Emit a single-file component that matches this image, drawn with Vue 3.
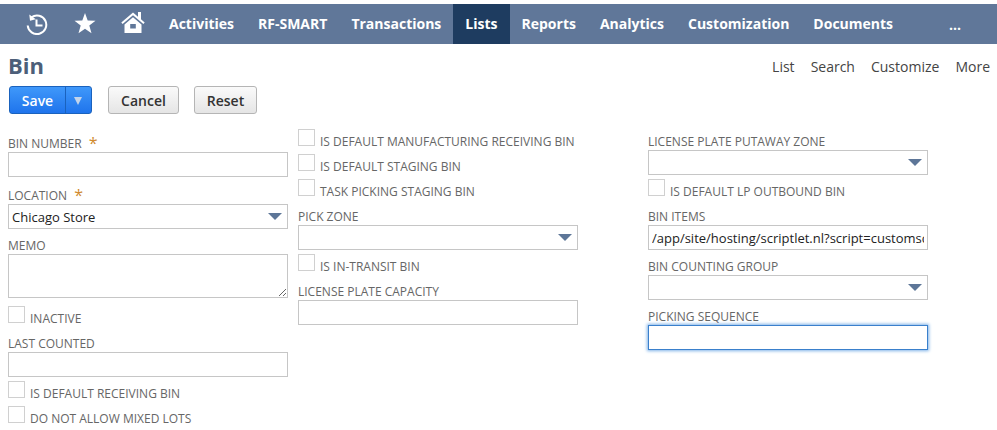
<script setup>
const navItems = ['Activities','RF-SMART','Transactions','Lists','Reports','Analytics','Customization','Documents']
const links = ['List','Search','Customize','More']
</script>

<template>
  <div class="page">
    <nav class="nav">
      <div class="icons">
        <svg class="ic clock" width="22" height="22" viewBox="0 0 22 22" fill="none" stroke="#fff" stroke-width="2">
          <path d="M5.500 4.200A9.300 9.300 0 1 1 1.700 12.500" />
          <path d="M3.300 1.500l0.700 6.300 5.800-1.500z" fill="#fff" stroke="none" />
          <path d="M10.500 6.500v6h6" />
        </svg>
        <svg class="ic star" width="22" height="21" viewBox="0 0 22 21" fill="#fff">
          <path d="M11 0l2.700 7.400 7.800.3-6.200 4.800 2.200 7.700L11 15.800l-6.500 4.400 2.200-7.700L0.500 7.700l7.800-.3z" />
        </svg>
        <svg class="ic home" width="24" height="21" viewBox="0 0 24 21" fill="#fff">
          <path d="M12 0.500L0.300 10.500l1.300 1.500L12 3.200 22.400 12l1.300-1.500-3.700-3.200V0h-3v4.800z" />
          <path fill-rule="evenodd" d="M12 5.200L3.500 12.500V21h17v-8.500zM9.200 12h5.600v4.500H9.200z" />
        </svg>
      </div>
      <a v-for="item in navItems" :key="item" class="item" :class="{ active: item === 'Lists' }">{{ item }}</a>
      <a class="more">...</a>
    </nav>

    <header class="head">
      <h1>Bin</h1>
      <div class="links"><a v-for="l in links" :key="l">{{ l }}</a></div>
    </header>

    <div class="buttons">
      <div class="save">
        <span class="save-label">Save</span>
        <span class="save-arrow"></span>
      </div>
      <button class="btn cancel">Cancel</button>
      <button class="btn reset">Reset</button>
    </div>

    <div class="form">
      <div class="col c1">
        <label class="lbl req">BIN NUMBER <i>*</i></label>
        <input class="inp" />
        <label class="lbl req">LOCATION <i>*</i></label>
        <div class="sel">Chicago Store<b></b></div>
        <label class="lbl">MEMO</label>
        <textarea class="area"></textarea>
        <div class="chk"><span></span>INACTIVE</div>
        <label class="lbl">LAST COUNTED</label>
        <input class="inp" />
        <div class="chk"><span></span>IS DEFAULT RECEIVING BIN</div>
        <div class="chk"><span></span>DO NOT ALLOW MIXED LOTS</div>
      </div>
      <div class="col c2">
        <div class="chk"><span></span>IS DEFAULT MANUFACTURING RECEIVING BIN</div>
        <div class="chk"><span></span>IS DEFAULT STAGING BIN</div>
        <div class="chk"><span></span>TASK PICKING STAGING BIN</div>
        <label class="lbl">PICK ZONE</label>
        <div class="sel"><b></b></div>
        <div class="chk"><span></span>IS IN-TRANSIT BIN</div>
        <label class="lbl">LICENSE PLATE CAPACITY</label>
        <input class="inp" />
      </div>
      <div class="col c3">
        <label class="lbl">LICENSE PLATE PUTAWAY ZONE</label>
        <div class="sel"><b></b></div>
        <div class="chk"><span></span>IS DEFAULT LP OUTBOUND BIN</div>
        <label class="lbl">BIN ITEMS</label>
        <input class="inp url" value="/app/site/hosting/scriptlet.nl?script=customscript_rfs_bin_items" />
        <label class="lbl">BIN COUNTING GROUP</label>
        <div class="sel"><b></b></div>
        <label class="lbl">PICKING SEQUENCE</label>
        <input class="inp focus" />
      </div>
    </div>
  </div>
</template>

<style>
html, body { margin: 0; background: #fff; }
</style>

<style scoped>
.page { width: 997px; height: 430px; overflow: hidden; font-family: "Open Sans", sans-serif; color: #333; padding-top: 4px; box-sizing: border-box; }
.nav { height: 40px; background: #607799; display: flex; align-items: stretch; color: #fff; }
.icons { width: 157px; display: flex; align-items: center; flex: none; }
.ic { display: block; flex: none; }
.clock { margin-left: 26px; margin-top: -1px; }
.star { margin-left: 26px; margin-top: -1px; }
.home { margin-left: 25px; margin-top: -3px; }
.item { padding: 0 12px; font-size: 14px; font-weight: 700; line-height: 40px; }
.item.active { background: #1e3c60; }
.more { margin-left: 44px; font-size: 14px; font-weight: 700; line-height: 42px; }
.head { display: flex; justify-content: space-between; align-items: center; height: 36px; padding: 6px 7px 0 8px; box-sizing: border-box; }
h1 { margin: 0; font-size: 22px; font-weight: 700; color: #4d5f79; line-height: 30px; }
.links { display: flex; gap: 16px; font-size: 14px; color: #444; margin-top: 2px; }
.buttons { display: flex; margin: 6px 0 0 9px; height: 28px; }
.save { width: 83px; height: 28px; box-sizing: border-box; display: flex; border: 1px solid #1a62bd; border-radius: 3px; background: linear-gradient(#3f98fa, #1f74ec); color: #fff; font-size: 14px; font-weight: 600; }
.save-label { width: 56px; text-align: center; line-height: 27px; border-right: 1px solid #1a62bd; box-sizing: border-box; }
.save-arrow { flex: 1; position: relative; }
.save-arrow::after { content: ""; position: absolute; left: 8px; top: 10px; border: 4px solid transparent; border-top: 8px solid #c3d4ea; border-bottom: 0; }
.btn { height: 28px; box-sizing: border-box; border: 1px solid #b5b5b5; border-radius: 3px; background: linear-gradient(#fafafa, #e5e5e5); font: 600 14px "Open Sans", sans-serif; color: #333; padding: 0; margin: 0; }
.cancel { margin-left: 16px; margin-right: 15px; width: 71px; }
.reset { width: 63px; }
.form { display: flex; padding-left: 8px; margin-top: 11px; }
.col { width: 280px; display: flex; flex-direction: column; align-items: flex-start; flex: none; }
.c2 { margin-left: 10px; }
.c3 { margin-left: 70px; }
.lbl { height: 25px; width: 100%; font-size: 12px; line-height: 16px; color: #666; display: flex; align-items: flex-end; box-sizing: border-box; white-space: pre; }
.lbl.req { height: 27px; }
.lbl i { font-style: normal; font-size: 16px; color: #d08a2e; margin-left: 4px; line-height: 18px; }
.inp, .sel { width: 280px; height: 25px; box-sizing: border-box; border: 1px solid #c6c6c6; background: #fff; margin: 0; flex: none; display: block; outline: none; }
.sel { position: relative; font-size: 13px; line-height: 25px; padding-left: 3px; color: #222; }
.sel b { position: absolute; right: 5px; top: 8px; width: 0; height: 0; border-left: 7px solid transparent; border-right: 7px solid transparent; border-top: 7px solid #5d7698; }
.url { font: 13px "Open Sans", sans-serif; color: #222; padding: 0 3px; }
.focus { border-color: #3a80cc; box-shadow: 0 0 3px 1px #7fb3e8; }
.area { width: 280px; height: 44px; box-sizing: border-box; border: 1px solid #c6c6c6; margin: 0 0 4px; display: block; flex: none; }
.chk { height: 25px; display: flex; align-items: flex-end; width: 100%; white-space: nowrap; font-size: 12px; line-height: 16px; color: #666; box-sizing: border-box; }
.chk span { width: 17px; height: 17px; box-sizing: border-box; border: 1px solid #d0d0d0; margin: 0 5px 4px 0; flex: none; }
</style>
